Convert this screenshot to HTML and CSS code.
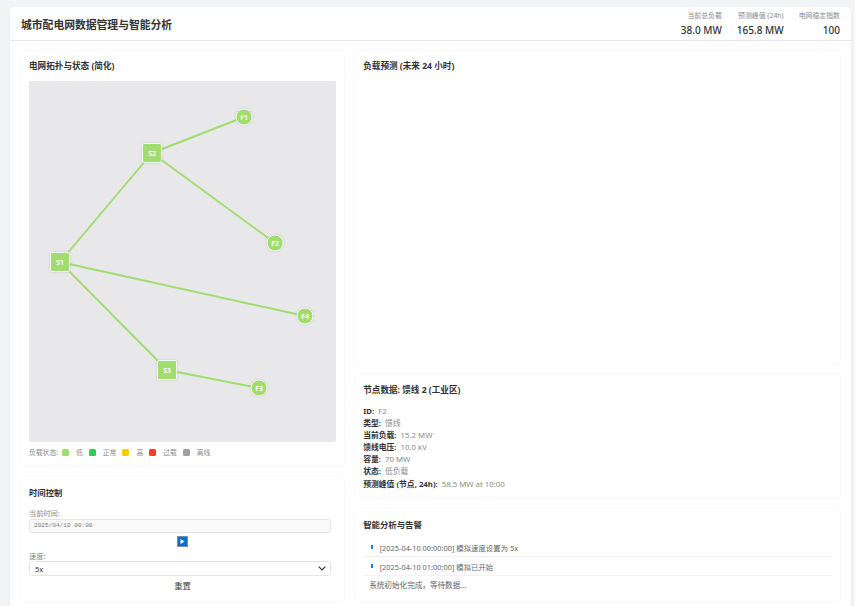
FILE: index.html
```html
<!DOCTYPE html>
<html lang="zh">
<head>
<meta charset="utf-8">
<title>城市配电网数据管理与智能分析</title>
<link rel="stylesheet" href="styles.css">
</head>
<body>
<div class="app">
  <header class="header">
    <h1 class="app-title">城市配电网数据管理与智能分析</h1>
    <div class="stats">
      <div class="stat"><div class="stat-label">当前总负载</div><div class="stat-value">38.0 MW</div></div>
      <div class="stat"><div class="stat-label">预测峰值 (24h)</div><div class="stat-value">165.8 MW</div></div>
      <div class="stat"><div class="stat-label">电网稳定指数</div><div class="stat-value">100</div></div>
    </div>
  </header>
  <main class="main">
    <div class="col">
      <section class="card card-topo">
        <h2 class="card-title">电网拓扑与状态 (简化)</h2>
        <svg class="topo" viewBox="0 0 307 361">
          <g class="links">
            <line x1="31" y1="181" x2="123" y2="72"/>
            <line x1="123" y1="72" x2="215" y2="36"/>
            <line x1="123" y1="72" x2="246" y2="162"/>
            <line x1="31" y1="181" x2="276" y2="235"/>
            <line x1="31" y1="181" x2="138" y2="289"/>
            <line x1="138" y1="289" x2="230" y2="307"/>
          </g>
          <g class="node"><rect x="21.5" y="171.5" width="19" height="19" rx="1.5"/><text x="31" y="183.5">S1</text></g>
          <g class="node"><rect x="113.5" y="62.5" width="19" height="19" rx="1.5"/><text x="123" y="74.5">S2</text></g>
          <g class="node"><rect x="128.5" y="279.5" width="19" height="19" rx="1.5"/><text x="138" y="291.5">S3</text></g>
          <g class="node"><circle cx="215" cy="36" r="8"/><text x="215" y="38.5">F1</text></g>
          <g class="node"><circle cx="246" cy="162" r="8"/><text x="246" y="164.5">F2</text></g>
          <g class="node"><circle cx="230" cy="307" r="8"/><text x="230" y="309.5">F3</text></g>
          <g class="node"><circle cx="276" cy="235" r="8"/><text x="276" y="237.5">F4</text></g>
        </svg>
        <div class="legend">
          <span class="legend-title">负载状态:</span>
          <i class="swatch low"></i><span class="legend-text">低</span>
          <i class="swatch normal"></i><span class="legend-text">正常</span>
          <i class="swatch high"></i><span class="legend-text">高</span>
          <i class="swatch over"></i><span class="legend-text">过载</span>
          <i class="swatch off"></i><span class="legend-text">离线</span>
        </div>
      </section>
      <section class="card card-time">
        <h2 class="card-title big">时间控制</h2>
        <label class="field-label">当前时间:</label>
        <div class="time-input">2025/04/10 00:00</div>
        <div class="play-row">
          <button class="play" aria-label="播放"><svg viewBox="0 0 11 11" width="11" height="11"><rect x="0.5" y="0.5" width="10" height="10" fill="#0a6ccb" stroke="#7d8fa3"/><path d="M3.5 3l4 2.5-4 2.5z" fill="#fff"/></svg></button>
        </div>
        <label class="field-label">速度:</label>
        <div class="select"><span>5x</span><svg viewBox="0 0 8 5" width="8" height="5"><path d="M.7.7 4 4l3.3-3.3" fill="none" stroke="#333" stroke-width="1.1"/></svg></div>
        <div class="reset">重置</div>
      </section>
    </div>
    <div class="col">
      <section class="card card-forecast">
        <h2 class="card-title">负载预测 (未来 24 小时)</h2>
      </section>
      <section class="card card-node">
        <h2 class="card-title node-title">节点数据: 馈线 2 (工业区)</h2>
        <p class="kv"><b>ID:</b> <span>F2</span></p>
        <p class="kv"><b>类型:</b> <span>馈线</span></p>
        <p class="kv"><b>当前负载:</b> <span>15.2 MW</span></p>
        <p class="kv"><b>馈线电压:</b> <span>10.0 kV</span></p>
        <p class="kv"><b>容量:</b> <span>70 MW</span></p>
        <p class="kv"><b>状态:</b> <span>低负载</span></p>
        <p class="kv"><b>预测峰值 (节点, 24h):</b> <span>58.5 MW at 10:00</span></p>
      </section>
      <section class="card card-alerts">
        <h2 class="card-title big">智能分析与告警</h2>
        <ul class="alerts">
          <li class="alert">[2025-04-10 00:00:00] 模拟速度设置为 5x</li>
          <li class="alert">[2025-04-10 01:00:00] 模拟已开始</li>
          <li class="alert-plain">系统初始化完成，等待数据...</li>
        </ul>
      </section>
    </div>
  </main>
</div>
</body>
</html>
```
FILE: styles.css
```css
* { box-sizing: border-box; }
html, body { height: 100%; }
body {
  margin: 0;
  background: #f3f4f6;
  font-family: "Noto Sans", "Noto Sans CJK SC", sans-serif;
  color: #333;
  overflow: hidden;
  padding: 7px 4px 0 10px;
}
.app {
  background: #fff;
  border-radius: 5px 5px 0 0;
  box-shadow: 0 1px 3px rgba(0,0,0,.06);
  height: 600px;
}
.header {
  height: 34px;
  display: flex;
  justify-content: space-between;
  align-items: center;
  padding: 0 11px;
  border-bottom: 1px solid #e8e8ea;
}
.app-title { margin: 0; font-size: 10.8px; font-weight: 700; color: #333; }
.stats { display: flex; gap: 15px; }
.stat { text-align: right; }
.stat-label { font-size: 6.9px; line-height: 11px; color: #8a8a8e; }
.stat-value { font-size: 10px; line-height: 14px; font-weight: 500; margin-top: 2px; color: #333; }
.main {
  display: grid;
  grid-template-columns: 2fr 3fr;
  gap: 11px;
  padding: 10px 11px 0;
}
.col { display: flex; flex-direction: column; gap: 11px; }
.card {
  background: #fff;
  border-radius: 5px;
  box-shadow: 0 0 3px rgba(0,0,0,.05);
  padding: 10px 8px 0;
}
.card-title {
  margin: 0;
  font-size: 8.6px;
  line-height: 11px;
  font-weight: 700;
  color: #333;
}
.card-title.big { font-size: 8.4px; line-height: 12px; }
.card-topo { height: 415px; padding-top: 10px; }
.topo {
  display: block;
  width: 307px;
  height: 361px;
  margin-top: 9px;
  background: #e8e8ea;
  border-radius: 2px;
}
.links line { stroke: #a0dc6e; stroke-width: 1.9; }
.node rect, .node circle {
  fill: #a0dc6e;
  stroke: #f6f8f2;
  stroke-width: 1;
  filter: drop-shadow(0 .5px 1px rgba(0,0,0,.15));
}
.node text {
  fill: #fff;
  font-size: 6.8px;
  font-weight: 700;
  text-anchor: middle;
}
.legend {
  display: flex;
  align-items: center;
  margin-top: 5px;
  height: 10px;
  font-size: 6.8px;
  color: #8a8a8e;
}
.legend-title { margin-right: 4px; }
.swatch { width: 7px; height: 7px; border-radius: 1.5px; margin-right: 7px; }
.legend-text { margin-right: 6px; }
.low { background: #a0dc6e; }
.normal { background: #34c759; }
.high { background: #ffcc00; }
.over { background: #ff3b30; }
.off { background: #a0a0a2; }
.card-time { height: 125px; }
.field-label {
  display: block;
  font-size: 7.2px;
  line-height: 10px;
  color: #8a8a8e;
}
.card-time .big + .field-label { margin-top: 9px; }
.time-input {
  width: 302px;
  height: 14px;
  margin-top: 1px;
  padding-left: 4px;
  background: #fafafa;
  border: 1px solid #e4e4e6;
  border-radius: 3px;
  font: 6.1px/12px "Liberation Mono", monospace;
  color: #777;
}
.play-row { display: flex; justify-content: center; width: 307px; margin-top: 3px; height: 11px; }
.play { display: block; width: 11px; height: 11px; padding: 0; border: 0; background: none; }
.play svg { display: block; }
.play-row + .field-label { margin-top: 4px; }
.select {
  width: 302px;
  height: 15px;
  display: flex;
  justify-content: space-between;
  align-items: center;
  padding: 0 4px 0 5px;
  border: 1px solid #e4e4e6;
  border-radius: 3px;
  font-size: 7.5px;
  color: #333;
}
.reset { text-align: center; font-size: 8.4px; line-height: 12px; margin-top: 4px; width: 307px; color: #444; }
.card-forecast { height: 313px; }
.card-node { height: 124px; margin-top: -1px; padding-top: 11px; }
.node-title { margin-bottom: 9px; }
.kv { margin: 0; font-size: 7.8px; line-height: 12.1px; color: #8a8a8e; }
.kv b { color: #333; font-weight: 700; margin-right: 2px; }
.card-alerts { height: 93px; }
.alerts { list-style: none; margin: 7px 0 0; padding: 0; font-size: 7.4px; color: #666; }
.alert {
  display: flex;
  align-items: center;
  height: 19px;
  padding-left: 8px;
  border-bottom: 1px solid #f3f3f4;
}
.alert::before {
  content: "";
  width: 1.5px;
  height: 4px;
  background: #0a84ff;
  margin-right: 7px;
}
.alert-plain { padding-left: 6px; line-height: 19px; font-size: 7.6px; }
```
